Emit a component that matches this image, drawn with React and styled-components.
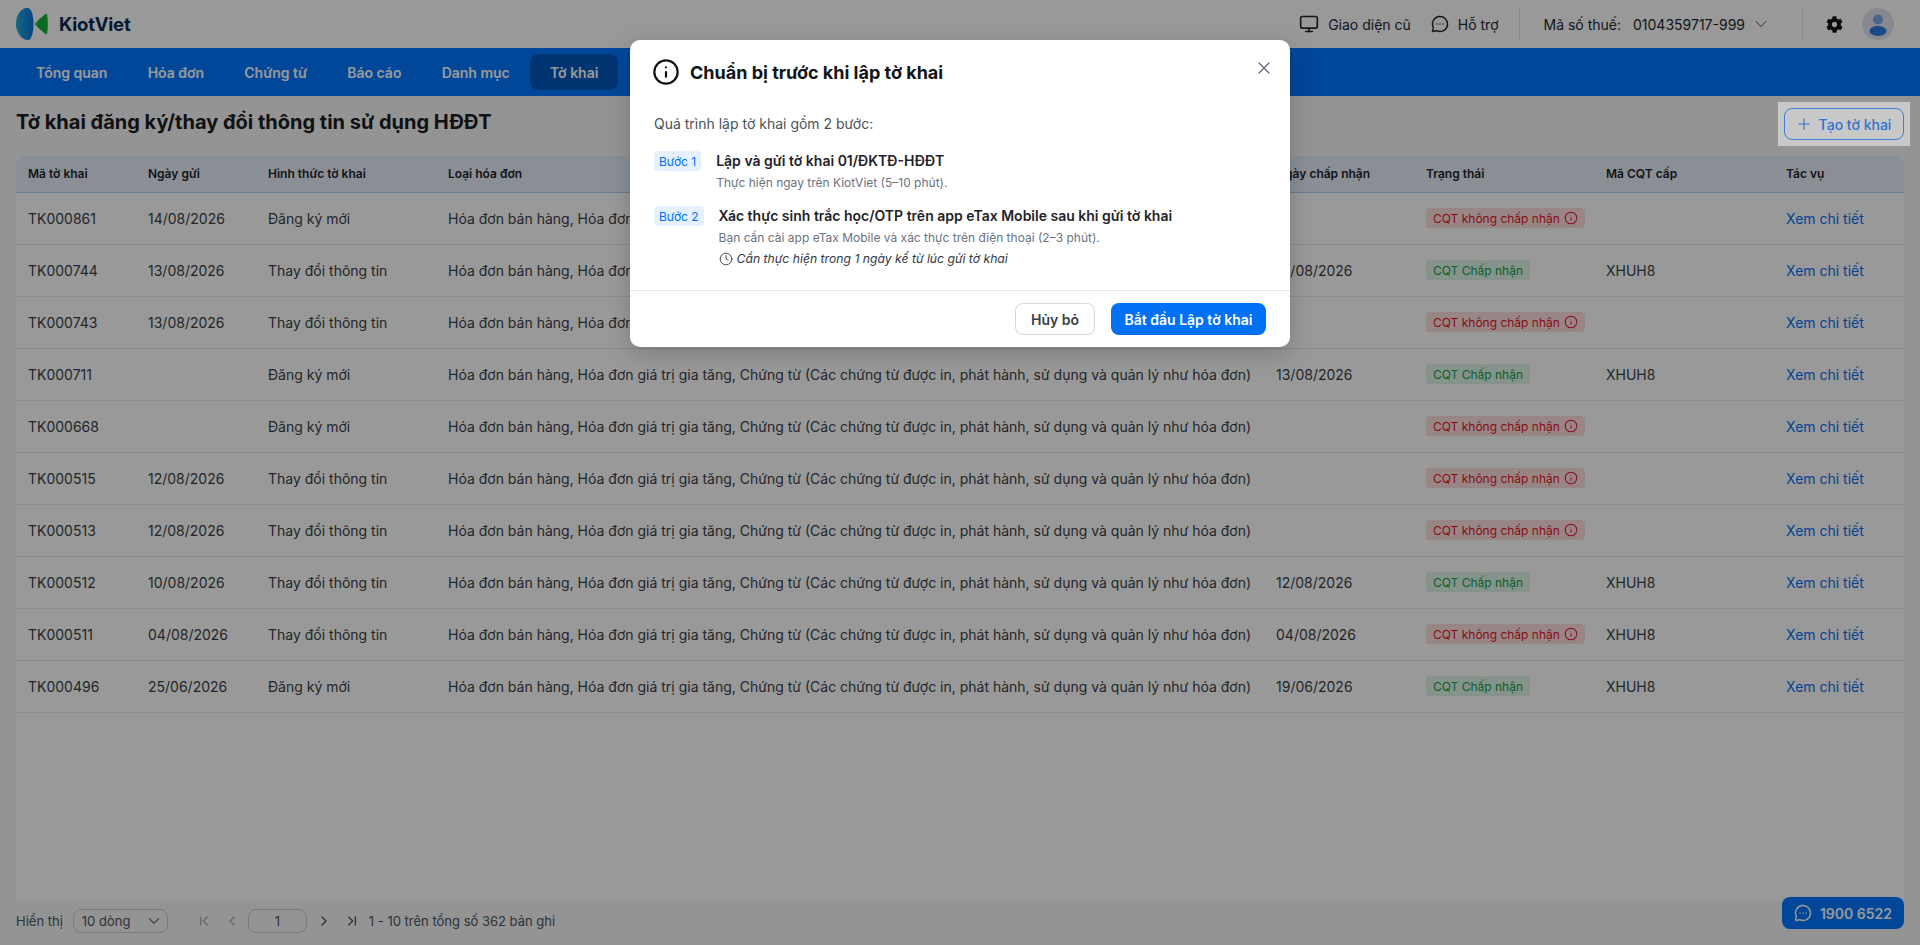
import React from 'react'
import styled, { createGlobalStyle } from 'styled-components'
import {
  Monitor, MessageCircleMore, ChevronDown, Info, X, Clock, Plus,
  ChevronFirst, ChevronLast, ChevronLeft, ChevronRight,
} from 'lucide-react'
import { FaCog } from 'react-icons/fa'

const LOAI = 'Hóa đơn bán hàng, Hóa đơn giá trị gia tăng, Chứng từ (Các chứng từ được in, phát hành, sử dụng và quản lý như hóa đơn)'
const NEW = 'Đăng ký mới'
const CHANGE = 'Thay đổi thông tin'

const ROWS = [
  ['TK000861', '14/08/2026', NEW, '', false, ''],
  ['TK000744', '13/08/2026', CHANGE, '13/08/2026', true, 'XHUH8'],
  ['TK000743', '13/08/2026', CHANGE, '', false, ''],
  ['TK000711', '', NEW, '13/08/2026', true, 'XHUH8'],
  ['TK000668', '', NEW, '', false, ''],
  ['TK000515', '12/08/2026', CHANGE, '', false, ''],
  ['TK000513', '12/08/2026', CHANGE, '', false, ''],
  ['TK000512', '10/08/2026', CHANGE, '12/08/2026', true, 'XHUH8'],
  ['TK000511', '04/08/2026', CHANGE, '04/08/2026', false, 'XHUH8'],
  ['TK000496', '25/06/2026', NEW, '19/06/2026', true, 'XHUH8'],
]

const COLUMNS = [
  ['Mã tờ khai', 120], ['Ngày gửi', 120], ['Hình thức tờ khai', 180], ['Loại hóa đơn', 828],
  ['Ngày chấp nhận', 150], ['Trạng thái', 180], ['Mã CQT cấp', 180], ['Tác vụ', 130],
]

const NAV = ['Tổng quan', 'Hóa đơn', 'Chứng từ', 'Báo cáo', 'Danh mục', 'Tờ khai']

function Logo() {
  return (
    <LogoMark width="32" height="32" viewBox="0 0 32 32">
      <defs>
        <linearGradient id="lens" x1="0" y1="0" x2="1" y2="0">
          <stop offset="0" stopColor="#27b0d8" />
          <stop offset="1" stopColor="#0a6fe0" />
        </linearGradient>
      </defs>
      <path d="M11.5 0C4.5 0 0 7 0 16c0 8 5 16 12 16 3.5 0 5.5-8 5.5-16S15.5 0 11.5 0Z" fill="url(#lens)" />
      <path d="M31 6.5C32 9 32 23 31 25.5c-.3.8-1 .9-1.6.4C26 23 22 20 19.6 17c-.5-.6-.5-1.4 0-2C22 12 26 9 29.4 6.1c.6-.5 1.3-.4 1.6.4Z" fill="#17b53d" />
    </LogoMark>
  )
}

function Avatar() {
  return (
    <AvatarBox width="32" height="32" viewBox="0 0 32 32">
      <circle cx="16" cy="16" r="16" fill="#dfe5ec" />
      <circle cx="16" cy="11.5" r="5" fill="#7aa9e6" />
      <ellipse cx="16" cy="23" rx="8.5" ry="5" fill="#2f7be0" />
    </AvatarBox>
  )
}

function App() {
  return (
    <Page>
      <GlobalStyle />
      <TopBar>
        <LogoLink>
          <Logo />
          <LogoText>KiotViet</LogoText>
        </LogoLink>
        <TopRight>
          <TopLink><Monitor size={20} strokeWidth={2} />Giao diện cũ</TopLink>
          <TopLink><MessageCircleMore size={18} strokeWidth={2} />Hỗ trợ</TopLink>
          <Divider />
          <TaxBlock>
            <span>Mã số thuế:</span>
            <TaxValue>0104359717-999</TaxValue>
            <ChevronDown size={20} strokeWidth={1.25} color="#6b7280" />
          </TaxBlock>
          <Divider />
          <GearWrap><FaCog size={17} /></GearWrap>
          <Avatar />
        </TopRight>
      </TopBar>

      <NavBar>
        {NAV.map((item) => (
          <NavItem key={item} $active={item === 'Tờ khai'}>{item}</NavItem>
        ))}
      </NavBar>

      <TitleRow>
        <Title>Tờ khai đăng ký/thay đổi thông tin sử dụng HĐĐT</Title>
        <Spotlight>
          <CreateButton><Plus size={18} strokeWidth={1.5} />Tạo tờ khai</CreateButton>
        </Spotlight>
      </TitleRow>

      <Card>
        <Table>
          <thead>
            <tr>
              {COLUMNS.map(([name, width]) => (
                <Th key={name} $width={width}>{name}</Th>
              ))}
            </tr>
          </thead>
          <tbody>
            {ROWS.map((r) => (
              <tr key={r[0]}>
                <Td>{r[0]}</Td>
                <Td>{r[1]}</Td>
                <Td>{r[2]}</Td>
                <Td>{LOAI}</Td>
                <Td>{r[3]}</Td>
                <Td>
                  <Badge $ok={r[4]}>
                    {r[4] ? 'CQT Chấp nhận' : 'CQT không chấp nhận'}
                    {!r[4] && <Info size={14} strokeWidth={1.75} />}
                  </Badge>
                </Td>
                <Td>{r[5]}</Td>
                <Td><DetailLink>Xem chi tiết</DetailLink></Td>
              </tr>
            ))}
          </tbody>
        </Table>
      </Card>

      <Pager>
        <span>Hiển thị</span>
        <PageSize>10 dòng<ChevronDown size={18} strokeWidth={1.5} color="#6b7280" /></PageSize>
        <PagerIcons>
          <PagerIcon $dim><ChevronFirst size={16} strokeWidth={2} /></PagerIcon>
          <PagerIcon $dim><ChevronLeft size={16} strokeWidth={2} /></PagerIcon>
          <PageInput>1</PageInput>
          <PagerIcon><ChevronRight size={16} strokeWidth={2} /></PagerIcon>
          <PagerIcon><ChevronLast size={16} strokeWidth={2} /></PagerIcon>
        </PagerIcons>
        <span>1 - 10 trên tổng số 362 bản ghi</span>
      </Pager>

      <HotlineButton><MessageCircleMore size={18} strokeWidth={2} />1900 6522</HotlineButton>

      <Overlay>
        <Modal>
          <ModalHead>
            <Info size={28} strokeWidth={1.9} color="#111" />
            <ModalTitle>Chuẩn bị trước khi lập tờ khai</ModalTitle>
            <CloseButton><X size={20} strokeWidth={1.5} /></CloseButton>
          </ModalHead>
          <ModalBody>
            <Intro>Quá trình lập tờ khai gồm 2 bước:</Intro>
            <Step>
              <StepTag>Bước 1</StepTag>
              <StepText>
                <StepTitle>Lập và gửi tờ khai 01/ĐKTĐ-HĐĐT</StepTitle>
                <StepDesc>Thực hiện ngay trên KiotViet (5–10 phút).</StepDesc>
              </StepText>
            </Step>
            <Step>
              <StepTag>Bước 2</StepTag>
              <StepText>
                <StepTitle>Xác thực sinh trắc học/OTP trên app eTax Mobile sau khi gửi tờ khai</StepTitle>
                <StepDesc>Bạn cần cài app eTax Mobile và xác thực trên điện thoại (2–3 phút).</StepDesc>
                <StepNote><Clock size={14} strokeWidth={1.5} />Cần thực hiện trong 1 ngày kể từ lúc gửi tờ khai</StepNote>
              </StepText>
            </Step>
          </ModalBody>
          <ModalFoot>
            <GhostButton>Hủy bỏ</GhostButton>
            <PrimaryButton>Bắt đầu Lập tờ khai</PrimaryButton>
          </ModalFoot>
        </Modal>
      </Overlay>
    </Page>
  )
}

const GlobalStyle = createGlobalStyle`
html, body { margin: 0; padding: 0; }
body {
  font-family: Inter, "Noto Sans", sans-serif;
  font-size: 14px;
  color: #1f2328;
  overflow: hidden;
}
* { box-sizing: border-box; }
`
const Page = styled.div`
position: relative;
height: 945px;
display: flex;
flex-direction: column;
background: #f5f7f6;
overflow: hidden;
`
const TopBar = styled.header`
height: 48px;
flex: none;
display: flex;
align-items: center;
justify-content: space-between;
padding: 0 26px 0 16px;
background: #fff;
`
const LogoLink = styled.div`
display: flex;
align-items: center;
gap: 11px;
`
const LogoMark = styled.svg`
display: block;
`
const LogoText = styled.span`
font-size: 18.5px;
font-weight: 700;
color: #0b2a55;
letter-spacing: -0.2px;
`
const TopRight = styled.div`
display: flex;
align-items: center;
`
const TopLink = styled.div`
display: flex;
align-items: center;
gap: 9px;
margin-right: 20px;
color: #23272e;
svg { flex: none; }
`
const Divider = styled.div`
width: 1px;
height: 30px;
background: #e2e5e9;
margin-right: 23px;
`
const TaxBlock = styled.div`
display: flex;
align-items: center;
padding-left: 1px;
margin-right: 31px;
color: #23272e;
`
const TaxValue = styled.span`
margin: 0 6px 0 12px;
`
const GearWrap = styled.div`
display: flex;
margin-right: 19px;
color: #111;
`
const AvatarBox = styled.svg`
display: block;
`
const NavBar = styled.nav`
height: 48px;
flex: none;
display: flex;
align-items: center;
gap: 0.2px;
padding: 0 16px;
background: #0077ff;
`
const NavItem = styled.div`
height: 36px;
display: flex;
align-items: center;
padding: 0 20px;
border-radius: 8px;
font-weight: 600;
color: #fff;
background: ${(p) => (p.$active ? '#0059bf' : 'transparent')};
`
const TitleRow = styled.div`
height: 60px;
flex: none;
display: flex;
justify-content: space-between;
align-items: flex-start;
padding: 12px 16px 0;
`
const Title = styled.h1`
margin: 0;
font-size: 20px;
line-height: 28px;
font-weight: 700;
color: #1a1d21;
`
const Spotlight = styled.div`
position: relative;
z-index: 20;
margin: -6px -6px 0 0;
padding: 6px;
background: #c8c8c8;
`
const CreateButton = styled.div`
width: 120px;
height: 32px;
display: flex;
align-items: center;
justify-content: center;
gap: 6px;
padding-right: 2px;
border: 1px solid #3f7fd6;
border-radius: 8px;
font-weight: 500;
color: #2f72cf;
`
const Card = styled.div`
flex: 1;
margin: 0 16px;
background: #fff;
border-radius: 8px 8px 0 0;
overflow: hidden;
`
const Table = styled.table`
width: 1888px;
table-layout: fixed;
border-collapse: collapse;
`
const Th = styled.th`
width: ${(p) => p.$width}px;
height: 36px;
padding: 0 12px;
text-align: left;
font-size: 12px;
font-weight: 600;
color: #1f2328;
background: #e4eef8;
border-bottom: 1px solid #b5d0ee;
white-space: nowrap;
`
const Td = styled.td`
height: 52px;
padding: 0 12px;
border-bottom: 1px solid #e6e8ea;
white-space: nowrap;
color: #3a3f46;
`
const Badge = styled.span`
display: inline-flex;
align-items: center;
gap: 4px;
height: 20px;
padding: 0 7px;
border-radius: 4px;
font-size: 12px;
background: ${(p) => (p.$ok ? '#dff5e6' : '#fde0e0')};
color: ${(p) => (p.$ok ? '#0f9d4a' : '#e5121c')};
`
const DetailLink = styled.span`
color: #0070f4;
`
const Pager = styled.div`
height: 44px;
flex: none;
display: flex;
align-items: center;
padding: 0 16px 4px;
font-size: 13px;
color: #4b5563;
`
const PageSize = styled.div`
width: 95px;
height: 24px;
margin-left: 10px;
padding: 0 4px 0 8px;
display: flex;
align-items: center;
justify-content: space-between;
border: 1px solid #c9cdd2;
border-radius: 8px;
`
const PagerIcons = styled.div`
display: flex;
align-items: center;
margin: 0 3px 0 22px;
`
const PagerIcon = styled.div`
width: 28px;
display: flex;
justify-content: center;
color: ${(p) => (p.$dim ? '#a8adb3' : '#4b5563')};
`
const PageInput = styled.div`
width: 59px;
height: 24px;
margin: 0 3px 0 2px;
display: flex;
align-items: center;
justify-content: center;
border: 1px solid #c9cdd2;
border-radius: 8px;
`
const HotlineButton = styled.div`
position: absolute;
right: 16px;
bottom: 16px;
width: 122px;
height: 32px;
display: flex;
align-items: center;
justify-content: center;
gap: 8px;
border-radius: 8px;
background: #0077ff;
color: #fff;
font-weight: 600;
`
const Overlay = styled.div`
position: absolute;
inset: 0;
z-index: 10;
display: flex;
justify-content: center;
align-items: flex-start;
padding-top: 40px;
background: rgba(0, 0, 0, 0.4);
`
const Modal = styled.div`
width: 660px;
background: #fff;
border-radius: 10px;
box-shadow: 0 6px 24px rgba(0, 0, 0, 0.2);
`
const ModalHead = styled.div`
position: relative;
height: 64px;
display: flex;
align-items: center;
gap: 10px;
padding: 0 22px;
`
const ModalTitle = styled.h2`
margin: 0;
font-size: 18px;
font-weight: 700;
color: #111418;
`
const CloseButton = styled.div`
position: absolute;
top: 18px;
right: 16px;
display: flex;
color: #5f6b7a;
`
const ModalBody = styled.div`
height: 186px;
padding: 10px 24px 0;
`
const Intro = styled.p`
margin: 0 0 17px;
line-height: 20px;
color: #4b5158;
`
const Step = styled.div`
display: flex;
gap: 15px;
margin-bottom: 14px;
`
const StepTag = styled.span`
flex: none;
height: 20px;
padding: 0 5px;
display: flex;
align-items: center;
border-radius: 4px;
font-size: 12px;
color: #0070f4;
background: #e5f1ff;
`
const StepText = styled.div`
display: flex;
flex-direction: column;
`
const StepTitle = styled.div`
line-height: 20px;
font-weight: 600;
color: #1f2328;
`
const StepDesc = styled.div`
margin-top: 3px;
line-height: 18px;
font-size: 12px;
color: #6b7280;
`
const StepNote = styled.div`
display: flex;
align-items: center;
gap: 4px;
margin-top: 3px;
line-height: 18px;
font-size: 12.2px;
font-style: italic;
color: #33383f;
`
const ModalFoot = styled.div`
height: 57px;
display: flex;
justify-content: flex-end;
align-items: flex-start;
gap: 16px;
padding: 12px 24px 0;
border-top: 1px solid #e6e8ea;
`
const GhostButton = styled.div`
width: 80px;
height: 32px;
display: flex;
align-items: center;
justify-content: center;
border: 1px solid #d5d8dc;
border-radius: 8px;
font-weight: 600;
color: #3a3f46;
`
const PrimaryButton = styled.div`
width: 155px;
height: 32px;
display: flex;
align-items: center;
justify-content: center;
border-radius: 8px;
font-weight: 600;
color: #fff;
background: #0070f4;
`

export default App
